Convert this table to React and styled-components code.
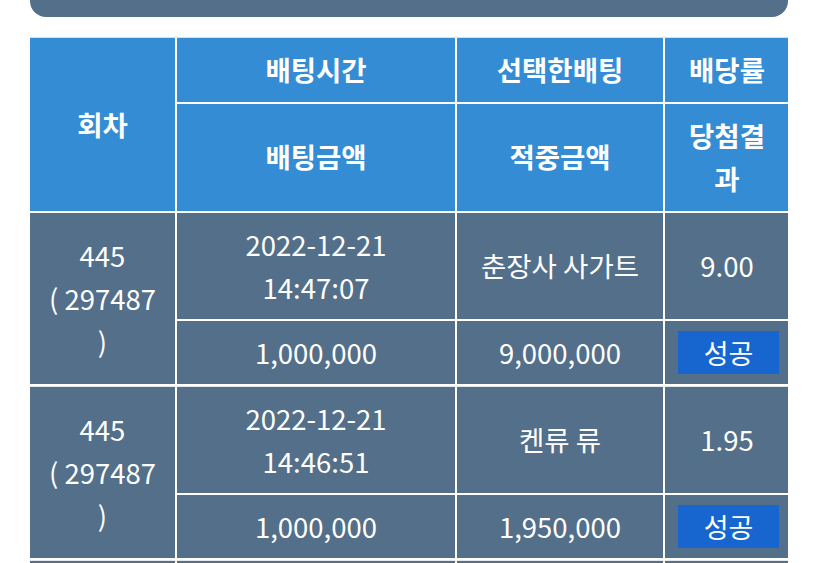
import styled, { createGlobalStyle } from "styled-components";

const GlobalStyle = createGlobalStyle`
  body {
    margin: 0;
    background: #ffffff;
    font-family: "Noto Sans CJK KR", "Noto Sans", sans-serif;
  }
`;

const Page = styled.div`
  width: 758px;
  margin-left: 30px;
  display: flex;
  flex-direction: column;
  gap: 20px;
`;

const TopBar = styled.div`
  height: 17px;
  background-color: #546f89;
  border-radius: 0 0 16px 16px;
`;

const TableWrap = styled.div`
  width: 758px;
  overflow: hidden;
`;

const Table = styled.table`
  width: 761px;
  border-collapse: separate;
  border-spacing: 0;
  table-layout: fixed;
  border-top: 1px solid #dcdcdc;
  border-left: 1px solid #dcdcdc;
  margin-left: -1px;
`;

const Cell = styled.td`
  border-right: 2px solid #ffffff;
  border-bottom: 2px solid #ffffff;
  text-align: center;
  vertical-align: middle;
  color: #ffffff;
  padding: 10px 13px;
  line-height: 43px;
  font-size: 27.5px;
  background-color: ${(p) => (p.$head ? "#348dd4" : "#546f89")};
  font-weight: ${(p) => (p.$head ? 700 : 400)};
  ${(p) => p.$head && "line-height: 43.5px;"}
  ${(p) => p.$groupStart && "border-top: 1px solid #e6e6e6;"}
  word-break: break-all;
`;

const Badge = styled.span`
  display: inline-block;
  width: 101px;
  height: 43px;
  line-height: 43px;
  background-color: #1766cf;
  color: #ffffff;
  font-size: 27px;
`;

const bets = [
  {
    round: "445",
    id: "( 297487 )",
    date: "2022-12-21",
    time: "14:47:07",
    pick: "춘장사 사가트",
    odds: "9.00",
    amount: "1,000,000",
    win: "9,000,000",
    result: "성공",
  },
  {
    round: "445",
    id: "( 297487 )",
    date: "2022-12-21",
    time: "14:46:51",
    pick: "켄류 류",
    odds: "1.95",
    amount: "1,000,000",
    win: "1,950,000",
    result: "성공",
  },
];

export default function App() {
  return (
    <>
      <GlobalStyle />
      <Page>
        <TopBar />
        <TableWrap>
          <Table>
            <colgroup>
              <col style={{ width: "147px" }} />
              <col style={{ width: "280px" }} />
              <col style={{ width: "208px" }} />
              <col style={{ width: "126px" }} />
            </colgroup>
            <tbody>
              <tr>
                <Cell as="th" $head rowSpan={2}>
                  회차
                </Cell>
                <Cell as="th" $head>배팅시간</Cell>
                <Cell as="th" $head>선택한배팅</Cell>
                <Cell as="th" $head>배당률</Cell>
              </tr>
              <tr>
                <Cell as="th" $head>배팅금액</Cell>
                <Cell as="th" $head>적중금액</Cell>
                <Cell as="th" $head>당첨결과</Cell>
              </tr>
              {bets.map((b, i) => (
                <>
                  <tr key={"a" + i}>
                    <Cell rowSpan={2} $groupStart={i > 0}>
                      {b.round}
                      <br />
                      {b.id}
                    </Cell>
                    <Cell $groupStart={i > 0}>
                      {b.date}
                      <br />
                      {b.time}
                    </Cell>
                    <Cell $groupStart={i > 0}>{b.pick}</Cell>
                    <Cell $groupStart={i > 0}>{b.odds}</Cell>
                  </tr>
                  <tr key={"b" + i}>
                    <Cell>{b.amount}</Cell>
                    <Cell>{b.win}</Cell>
                    <Cell>
                      <Badge>{b.result}</Badge>
                    </Cell>
                  </tr>
                </>
              ))}
              <tr>
                <Cell $groupStart>&nbsp;</Cell>
                <Cell $groupStart>&nbsp;</Cell>
                <Cell $groupStart>&nbsp;</Cell>
                <Cell $groupStart>&nbsp;</Cell>
              </tr>
            </tbody>
          </Table>
        </TableWrap>
      </Page>
    </>
  );
}
